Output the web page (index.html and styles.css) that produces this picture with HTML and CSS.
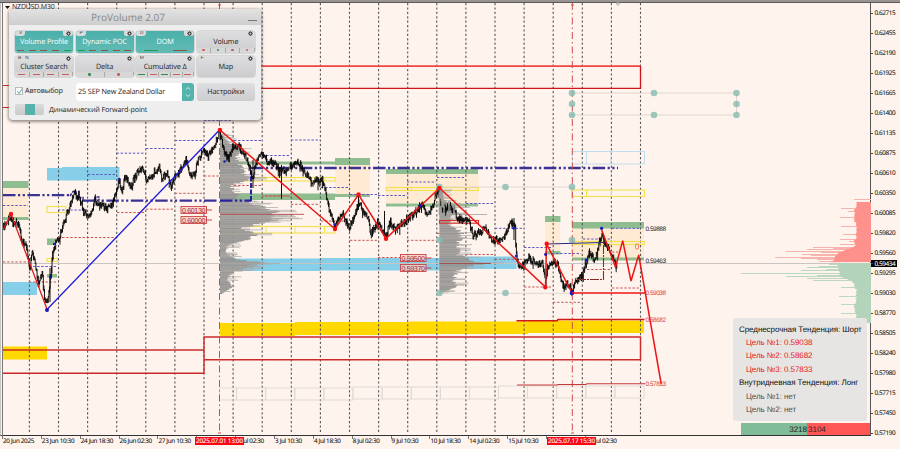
FILE: index.html
```html
<!DOCTYPE html>
<html lang="ru">
<head>
<meta charset="utf-8">
<title>NZDUSD,M30</title>
<link rel="stylesheet" href="styles.css">
</head>
<body>
<div class="terminal">
  <div class="topbar"></div>
  <div class="workspace">
    <main class="plot">
      <svg class="chart" id="chart" viewBox="0 0 872 436" width="872" height="436"></svg>

      <span class="symbol">NZDUSD,M30</span>

      <section class="panel">
        <header class="panel-title"><span>ProVolume 2.07</span><i class="minimize"></i></header>
        <div class="panel-body">
          <div class="buttons" id="buttons"></div>
          <div class="row">
            <label class="auto"><span class="check"><svg viewBox="0 0 8 8"><path d="M1.5 3.5 L3.5 6.5 L7 0.5"/></svg></span>Автовыбор</label>
            <div class="select"><span>25 SEP New Zealand Dollar</span><b><svg viewBox="0 0 12 18"><path d="M4 6.5 L6 4.5 L8 6.5 M4 11.5 L6 13.5 L8 11.5"/></svg></b></div>
            <button class="settings">Настройки</button>
          </div>
          <div class="row toggle-row"><span class="toggle"><i></i></span><span class="toggle-label">Динамический Forward-point</span></div>
        </div>
      </section>

      <section class="trend">
        <p class="head">Среднесрочная Тенденция: Шорт</p>
        <p class="target short">Цель №1: 0.59038</p>
        <p class="target short">Цель №2: 0.58682</p>
        <p class="target short">Цель №3: 0.57833</p>
        <p class="head">Внутридневная Тенденция: Лонг</p>
        <p class="target">Цель №1: нет</p>
        <p class="target">Цель №2: нет</p>
      </section>

      <div class="balance"><span class="buy">3218</span><span class="sell">3104</span></div>
    </main>
    <aside class="prices" id="prices"><span class="current">0.59434</span></aside>
  </div>
  <footer class="times" id="times"><span class="flag first">2025.07.01 13:00</span><span class="flag second">2025.07.17 15:30</span></footer>
</div>
<script src="chart.js"></script>
</body>
</html>
```
FILE: styles.css
```css
* { box-sizing: border-box; }
body { margin: 0; background: #fff4ed; font-family: "Open Sans", "Noto Sans", sans-serif; color: #222; text-rendering: geometricPrecision; }
.terminal { width: 900px; height: 449px; overflow: hidden; display: flex; flex-direction: column; background: #fff4ed; }
.topbar { height: 3px; background: #989494; border-bottom: 1px solid #5d5959; flex: none; }
.workspace { display: flex; height: 433px; flex: none; }
.plot { position: relative; width: 871px; border-left: 1px solid #c9c4c2; border-right: 1px solid #555; border-bottom: 1px solid #333; flex: none; }
.chart { position: absolute; left: -1px; top: -3px; overflow: visible; }
.symbol { position: absolute; left: 11px; top: 1px; font: 7px/8px "Open Sans", sans-serif; color: #222; letter-spacing: -0.2px; }

.panel { position: absolute; left: 8px; top: 6px; width: 252px; height: 111px; border-radius: 4px; background: #eeeeee; box-shadow: 0 1px 3px 1px rgba(90, 80, 75, .6); }
.panel-title { height: 16px; display: flex; align-items: center; justify-content: center; position: relative; padding-right: 14px; border-radius: 4px 4px 0 0; background: linear-gradient(#e2e2e2, #cecece); color: #888; font-size: 10px; line-height: 16px; }
.minimize { position: absolute; right: 4px; bottom: 4px; width: 9px; height: 1px; background: #777; }
.panel-body { padding: 6px 6px 0; }
.buttons { display: grid; grid-template-columns: repeat(4, 58px); column-gap: 2.6px; row-gap: 3px; }
.btn { height: 21.5px; border-radius: 3px; overflow: hidden; background: linear-gradient(#dedddf, #cccbcd); box-shadow: 0 0 0 .5px #bdbdbd; display: grid; grid-template-rows: 5px 11.5px 5px; text-align: center; }
.btn.on { background: linear-gradient(#4ab0aa, #63bbb4); color: #fff; }
.btn .tabs { display: flex; justify-content: space-between; }
.tab { height: 5px; padding: 0 2px 0 3px; background: #dcdcdc; border-radius: 0 0 3px 2px; font: 4.8px/5px "Liberation Sans", sans-serif; color: #444; min-width: 10px; white-space: pre; }
.tab svg { display: block; width: 5px; height: 5px; overflow: visible; }
.tab.gear { padding-left: 3px; }
.tab.none { background: none; }
.btn .name { font-size: 7.3px; line-height: 12px; letter-spacing: -.12px; white-space: nowrap; }
.marks { display: flex; }
.marks i { flex: 1; display: flex; align-items: center; justify-content: center; border-right: .5px solid #aaa; background: #d8d7d8; }
.on .marks i { background: none; border: 0; }
.marks i::after { content: ""; width: 7px; height: 1px; background: currentColor; }
.marks.two i::after { width: 14px; }
.marks.dots i::after { width: 2.4px; height: 2.4px; border-radius: 50%; }
.marks .r { color: #ce5b5b; }
.marks .g { color: #368b50; }
.on .marks .r { color: #8f5444; }
.on .marks .g { color: #1f9a55; }
.row { display: flex; margin-top: 6px; height: 18px; }
.auto { width: 60.6px; display: flex; align-items: center; gap: 2px; font-size: 7.2px; letter-spacing: -.15px; height: 15px; }
.check { width: 8px; height: 8px; background: #fff; border: .5px solid #bbb; }
.check svg { display: block; width: 7px; height: 7px; fill: none; stroke: #35a39d; overflow: visible; }
.select { width: 118.5px; background: #fff; border-radius: 3px; display: flex; justify-content: space-between; overflow: hidden; font-size: 7.3px; letter-spacing: -.17px; line-height: 18px; padding-left: 2.5px; margin-right: 2.6px; }
.select b { width: 12px; background: #55b3ad; }
.select svg { display: block; width: 12px; height: 18px; fill: none; stroke: #fff; stroke-width: .8; }
.settings { width: 58px; border: 0; padding: 0; border-radius: 3px; font: 7.3px/17px "Open Sans", sans-serif; letter-spacing: -.15px; color: #222; background: linear-gradient(#dfdee0, #cdccce); text-rendering: inherit; }
.toggle-row { margin-top: 2.5px; height: 12px; align-items: center; gap: 5px; font-size: 7.2px; letter-spacing: -.15px; }
.toggle { width: 29px; height: 11px; border-radius: 2px; background: linear-gradient(#dcdcdc, #cacaca); display: flex; justify-content: center; }
.toggle i { width: 10px; background: #55b3ad; }

.trend { position: absolute; left: 732px; top: 315px; width: 134px; height: 103px; padding: 4.5px 0 0 6px; border-radius: 3px; background: #e7e5e3; font: 8px/13.4px "Liberation Sans", Arial, sans-serif; letter-spacing: -.07px; white-space: nowrap; }
.trend p { margin: 0; color: #505050; }
.trend .head { color: #111; }
.trend .target { padding-left: 7px; }
.trend .short { color: #e8201e; }

.balance { position: absolute; right: 0; bottom: 0; width: 129px; height: 12px; display: flex; font: 8px/13px "Liberation Sans", Arial, sans-serif; color: #222; }
.buy { width: 66px; background: #7fbc97; text-align: right; padding-right: 0; }
.sell { flex: 1; background: #ff5656; padding-left: 1px; }

.prices { position: relative; width: 29px; display: grid; grid-auto-rows: 20px; font-size: 6.4px; line-height: 20px; letter-spacing: -0.4px; color: #111; -webkit-text-stroke: .1px; }
.prices span { display: flex; align-items: center; gap: 1.5px; height: 20px; }
.prices span::before { content: ""; width: 2px; height: 1px; background: #444; }
.prices .current { position: absolute; top: 257px; left: 0; width: 26px; height: 7px; background: #000; color: #fff; line-height: 7px; }

.times { position: relative; height: 13px; display: grid; grid-auto-flow: column; grid-auto-columns: 38.86px; justify-content: start; padding-left: 2px; font-size: 6.3px; line-height: 10px; letter-spacing: -0.3px; color: #111; white-space: nowrap; -webkit-text-stroke: .1px; }
.times .tick { border-left: .6px solid #777; height: 3px; line-height: 10px; }
.times .tick.after-first { padding-left: 7px; }
.times .tick.after-second { padding-left: 10px; }
.times .flag { position: absolute; top: 1px; height: 7.5px; line-height: 7.5px; width: 49px; background: #fa0512; color: #fff; text-align: center; letter-spacing: -.18px; }
.times .first { left: 195px; }
.times .second { left: 547px; }
```
FILE: chart.js
```javascript
const NS = 'http://www.w3.org/2000/svg';
const chart = document.getElementById('chart');

// Seeded generator keeps the series the same on every load.
let seed = 7;
function rnd() { seed = (seed * 16807) % 2147483647; return seed / 2147483647; }

function add(tag, attrs, text) {
  const node = document.createElementNS(NS, tag);
  for (const key in attrs) node.setAttribute(key, attrs[key]);
  if (text) node.textContent = text;
  chart.appendChild(node);
  return node;
}
function box(x1, y1, x2, y2, fill, opacity) {
  add('rect', { x: x1, y: y1, width: x2 - x1, height: y2 - y1, fill, opacity: opacity || 1 });
}
function frame(x1, y1, x2, y2, stroke, width) {
  add('rect', { x: x1, y: y1, width: x2 - x1, height: y2 - y1, fill: 'none', stroke, 'stroke-width': width || 1 });
}
function line(d, stroke, width, dash) {
  add('path', { d, fill: 'none', stroke, 'stroke-width': width || 1, 'stroke-dasharray': dash || 'none' });
}
function at(points, t, key, value) {
  for (let i = 1; i < points.length; i++) {
    if (t <= points[i][key]) {
      const a = points[i - 1], b = points[i];
      return a[value] + (b[value] - a[value]) * (t - a[key]) / (b[key] - a[key]);
    }
  }
  return points[points.length - 1][value];
}

const GREEN = '#8fbd90', SKY = '#87cee9', GOLD = '#ffd800', CREAM = '#ffebd3', PALE = '#f2e14c';

// Value zones
[[3,188,28,217],[335,165,370,194],[386,174,478.5,203],[545,222,560,251],[572,228,644,258]].forEach(r => box(...r, CREAM));
[[3,282,37,295],[47,168,91,180.5],[62,167,119.5,180],[220,258.5,320,271],[320,258,440,270.5],[440,256.5,516.5,269]].forEach(r => box(...r, SKY));
[[3,346.5,47,359.5],[220,323,295,336],[295,322,410,335],[410,321.5,528,334],[528,320.5,644,333]].forEach(r => box(...r, GOLD));
[[3,181,28.5,188],[3,217,28.5,220],[47,238.5,56,245],[47,274,57,277.5],[220,161.5,335,164.5],[335,158,370,165],
 [220,193.5,335,200],[335,194,370,197],[386,169,478,174],[386,203.5,478,206.5],[545,216,560.5,222],[545,251,560.5,254.5],
 [572,222,644,228.5],[572,257.5,644,260.5]].forEach(r => box(...r, GREEN));

// Period separators
for (let i = 0; i < 22; i++) line(`M${29.4 + 29.1 * i} 3 V433`, '#555', 1.1, '2.2 2.2');
line('M3 263.5 H871', '#c9c4c1', 1);

// Forward levels
for (let i = 0; i < 15; i++) {
  const x1 = i ? 207.5 + 29.1 * i : 219.5, x2 = Math.min(236.6 + 29.1 * i, 644.5);
  const y = i < 5 ? 388 : i < 10 ? 387 : 386;
  frame(x1, y, x2, y + 12, '#ddd8d6', .9);
}
frame(572.5, 151.5, 644.5, 164, '#b9dbea', .9);
line('M586.5 151.5 V164 M611 151.5 V164', '#b9dbea', .9);
[[47,206.5,66,212.5],[47,258.5,57.5,261.5],[220,177.5,335,181],[220,226.5,335,233],[386,187.5,478.5,190.5],[572,190,644.5,196.5],[572,241.5,644.5,244.5]]
  .forEach(r => frame(...r, PALE, 1.1));
line('M236.5 226.5 V233 M266 226.5 V233 M295 226.5 V233 M324.5 226.5 V233 M266 177.5 V181 M295 177.5 V181 M325 177.5 V181 M586.5 190 V197 M611.5 190 V197 M586.5 242 V244.5 M611.5 242 V244.5 M411.5 187 V190 M469.5 187 V190', PALE, 1);

// Resistance and support boxes
line('M3 85.5 H12 M3 107.5 H12', '#dd1a1a', 1.2);
line('M200 66.2 H640.5', '#f04440', 1.8);
line('M640.5 66 V88.3 H200', '#cf1518', 1.3);
line('M3 350 H204 M3 373.2 H204 V337 H640.5 V359.7 H204', '#cc2a2a', 1.4);

// Day highs and lows
line(`M3 205.5 H28 M29 266.5 H57 M58 210 H87 M88 174.5 H116 M116.5 153.2 H145 M146 148.5 H174 M175 140.5 H203 M204 120.5 H233
 M234 140.5 H262 M262 155.5 H290 M291 140 H320 M321 187.5 H349 M350 194.5 H378 M378 195.5 H407 M407 182 H436 M437 177.5 H465 M466 203.5 H494
 M495 228.3 H523 M524 247.5 H552 M552 253.5 H581 M583 239 H611 M612 228.3 H640`, '#5a56c4', 1, '2.4 1.7');
line(`M3 262 H29 M29 282 H57 M58 237.5 H116 M117 212.5 H145 M146 209.2 H174 M175 193.3 H203 M204 176 H219 M234 185.5 H262 M262 196 H290 M291 204.3 H320
 M321 221 H349 M350 240.3 H378 M378 257.5 H400 M407 240.3 H436 M437 233.5 H465 M466 254.5 H494 M495 259.3 H523 M524 287 H552
 M553 302.3 H581 M583 269.5 H611 M612 252 H618 M612 288 H640`, '#c75452', 1, '2.4 1.7');

// Volume profiles: a solid body with one bar per price step
function profile(x, y1, y2, shape) {
  let body = '', tails = '';
  for (let y = y1; y < y2; y += .7) {
    const w = at(shape, y, 0, 1);
    body += `M${x} ${y.toFixed(1)}h${(w * (.72 + rnd() * .3)).toFixed(1)}`;
    if (rnd() > .7) tails += `M${x} ${y.toFixed(1)}h${(w * 1.1 + rnd() * 12).toFixed(1)}`;
  }
  line(body, '#959493', 1);
  line(tails, '#aaa6a4', .7);
}
profile(220, 134, 294, [[134,2],[143,10],[150,26],[157,16],[163,24],[170,24],[175,28],[180,34],[184,12],[190,14],[200,24],[205,44],[210,60],[213,62],[216,56],[219,68],
  [222,50],[227,27],[232,34],[236,42],[240,28],[244,10],[250,7],[255,8],[260,24],[263,48],[267,34],[272,14],[280,8],[287,15],[294,2]]);
profile(439.5, 190, 293, [[190,3],[200,5],[206,18],[213,20],[218,12],[225,10],[232,24],[240,24],[247,20],[255,22],[260,34],[263.5,54],[267,32],[272,19],[280,16],[287,19],[293,2]]);
line('M220 214.3 H304', '#b04a4a', .9);
line('M439.5 263.5 H491', '#a05050', 1);
line('M439.5 214.5 H487', '#a5a09e', .8);
line('M265 196 H290', '#c75452', 1, '2 2');
frame(439.5, 220.5, 478.5, 223.2, '#d8302c', 1.1);

// Dynamic point of control
const NAVY = '#3a3197', DASH = '12.5 2.5 2.2 2.5 2.2 2.5';
line('M3 195.2 H70 M82 200.6 H219', NAVY, 2.3, DASH);
line('M70 196 L73 191.5 H76 L77 197.5 H83 V200.5 M94 200 L96 197 H99 V200.5', NAVY, 1.5, '3 1');
line('M220 200.6 H251', '#2722a0', 2.3, DASH);
line('M251 201 V167.5', '#2722a0', 2, '5 1.5');
line('M251 168 H618', NAVY, 2.5, DASH);

// Price bars
const price = [[3,228],[7,222],[11,216],[14,224],[17,221],[20,230],[22,242],[26,245],[28,257],[30,270],[32,250],[35,262],[38,283],[42,272],[45,304],[48,300],[49,290],[51,272],[52,260],
[54,247],[58,240],[60,237],[62,227],[67,215],[71,202],[74,192],[77,200],[79,195],[83,210],[88,218],[92,213],[95,198],[98,205],[103,206],[107,210],[112,203],[117,189],[119,180],
[122,194],[125,174],[131,187],[137,173],[143,168],[147,182],[153,174],[159,167],[162,179],[167,173],[171,186],[175,177],[180,170],[186,160],[190,174],[194,176],[198,161],[203,150],
[208,157],[215,145],[219,133],[221,137],[224,150],[228,159],[232,149],[238,144],[243,152],[248,163],[252.7,180],[255,167],[258,159],[263,154],[268,162],[275,163],[281,172],[287,168],
[295,163],[300,164],[305,174],[313,182],[322,180],[325,190],[330,212],[335,226],[342,213],[349,227],[355,216],[358.5,203],[363,212],[368,218],[371,235],[374,228],[378,223],[386,236],
[390,222],[395,229],[403,223],[413,215],[422,204],[428,217],[433,203],[438,192],[441,207],[443,211],[450,205],[458,218],[468,221],[471,228],[473,236],[485,229],[493,241],[503,240],[510,224],
[515,223],[516,255],[519,266],[525,264],[529,256],[535,264],[542,262],[545.5,284],[547,268],[553,262],[558,265],[562,282],[565,289],[568,283],[572,291],[575,282],[582,276],[589,253],
[595,260],[602,233],[605,245],[610,251],[615,264],[618,264]];
let bars = '', last = 228;
for (let x = 3; x <= 617; x += .62) {
  const y = at(price, x, 0, 1) + (rnd() - .5) * 6;
  const top = Math.min(y, last) - rnd() * 2.8, low = Math.max(y, last) + rnd() * 2.8 + (rnd() > .95 ? 4 : 0);
  bars += `M${x.toFixed(1)} ${top.toFixed(1)}V${low.toFixed(1)}`;
  last = y;
}
line(bars, '#000', .92);
line('M281.5 165 V199 M253 160 V188 M358.5 195 V210 M384.5 211 V236 M514 218 V240 M50 268 V302', '#111', 1);
line('M439.5 192 V215 M441 206 V212 M444 207 V216 M449 201 V212 M454 206 V214', '#999', 1.5);

// Vertical markers
line('M219.5 3 V433 M572.3 3 V433', '#cf4a4a', 1, '7 3 1.5 3');
line('M218 5 H221 M218 433 H221 M571 5 H574 M571 433 H574', '#cf4a4a', 1);

// Selection handles
line('M572 93 H736.5 V115 H572 M439.5 187 H572 M439.5 293.3 H572', '#ddd3ce', .9);
[[572,93],[654,93],[736.5,93],[572,104],[736.5,104],[572,115],[654,115],[736.5,115],[439.5,187],[505.5,187],[572,187],[439.5,240],[572,240],[439.5,293],[505.5,293]]
  .forEach(([cx, cy]) => add('circle', { cx, cy, r: 3.3, fill: '#86bab0', opacity: .8 }));

// Zigzag
line('M47 309.5 L219.5 130', '#1a1ae0', 1.3);
line('M3 230 L11 214 L47 309', '#dc1f1f', 1.3);
line('M220 130 L335 229 L358.5 194.5 L386 238.5 L439.5 188 L545.5 287 L546.5 244 L572 293', '#ec1515', 1.5);
line('M601.7 230 L615.5 267 L622.7 240.7 L631 281 L638.7 255 L661.2 384', '#ec1515', 1.5);
line('M546.5 244 L603 242.5', '#2b2a85', 1.2);
line('M577 279.5 H603.5 V240', '#8b2a2a', 1.1, '9 1 2 1');
[[11,214],[220,130],[335,229],[358.5,194.5],[386,238.7],[439.3,188],[545.3,287.3],[546.7,243.7]].forEach(([cx, cy]) => add('circle', { cx, cy, r: 2.2, fill: '#fa1010' }));
[[47,310,2],[572,293,2.3],[54,244,1.2],[50,277,1.2],[119.3,179,1.2],[224.5,161.5,1.2],[335,224.5,1.2],[513.7,228.3,1.4],[516.3,256,1.4],[545.5,254.5,1.4],[601.6,228.3,1.6],[586,260,1.4],[420,206,1.4]]
  .forEach(([cx, cy, r]) => add('circle', { cx, cy, r, fill: '#1515c0' }));

// Targets
line('M572 293 H645', '#ee1414', 1.4);
line('M516.5 320.7 H557 L558 319.5 H644.5', '#cf1818', 1.6);
line('M517 385 H557 L558 384.5 H586 L587 383.7 H645', '#c43838', 1.1);
[['0.59888',228.3,'#222'],['0.59463',260.3,'#222'],['0.59038',292.8,'#e0403c'],['0.58682',319.7,'#e0403c'],['0.57833',384,'#e0403c']]
  .forEach(([t, y, fill]) => add('text', { x: 645.5, y: y + 2.3, fill, 'font-size': 6.4, textLength: 20.5, 'font-family': 'Liberation Sans, sans-serif' }, t));
[['0.60130',181,210],['0.60000',181,220],['0.59500',400.5,258],['0.59370',400.5,268]].forEach(([t, x, y]) => {
  box(x, y - 3.5, x + 25.5, y + 3.5, '#f5cfc9', .75);
  frame(x, y - 3.5, x + 25.5, y + 3.5, '#c84444', .9);
  add('text', { x: x + 1, y: y + 2.6, fill: '#b02a2e', 'font-size': 7.2, textLength: 23.5, 'font-family': 'Liberation Sans, sans-serif' }, t);
  line(`M${x + 25} ${y} h6`, '#c84444', 1);
});
add('rect', { x: 635.5, y: 244, width: 3, height: 5, rx: 1.3, fill: 'none', stroke: '#ef6b52', 'stroke-width': .9 });

// Depth of market
const bids = [[202,14],[208,14],[209,16],[221,16],[222,14],[238,14],[240,16],[245,15],[248,20],[252,31],[256,35],[259,36],[262,40]];
const asks = [[263,33],[270,31],[276,30],[280,20],[283,16],[290,14],[300,14],[306,16],[315,14],[322,13]];
function depth(y1, y2, shape, fill, light, spikes) {
  spikes.forEach(([y, w]) => box(871 - w, y, 871, y + 1, light));
  for (let y = y1; y < y2; y += 1) box(871 - at(shape, y, 0, 1) - rnd() * 1.5, y, 871, y + 1.1, fill);
}
depth(202, 262, bids, '#ff918d', '#f7b3ac', [[199,17],[208,30],[211,23],[217,31],[226,30],[234,28],[239,31],[241,22],[244,31],[247,58],[248,38],[249,64],[251,85],[252,50],[254,69],[255,60],[257,96],[258,70],[259,54],[261,52]]);
depth(263, 322.5, asks, '#b3d3ba', '#bcd8c1', [[264,42],[266,52],[267,64],[269,45],[270,70],[273,130],[275,54],[276,85],[278,64],[280,58],[287,30],[296,32],[304,30],[313,30]]);

line('M616 3 L620 3 L618 5.5 Z', '#aaa', 1);
add('path', { d: 'M5 6 H10 L7.5 9 Z', fill: '#111' });
line('M2.5 3 V436', '#777', 1);

// Control buttons
const gear = '<svg viewBox="0 0 6 6"><circle cx="3" cy="3" r="1.7" fill="none" stroke="#444" stroke-width="1.3"/><path d="M3 .2V1.2M3 4.8V5.8M.2 3H1.2M4.8 3H5.8M1 1L1.7 1.7M4.3 4.3L5 5M5 1L4.3 1.7M1.7 4.3L1 5" stroke="#444" stroke-width=".8"/></svg>';
document.getElementById('buttons').innerHTML = [
  ['Volume Profile', 'V', 'on', 'rrrrg', ''], ['Dynamic POC', 'P', 'on', 'grrrr', ''], ['DOM', 'D', 'on', 'gr', 'two'], ['Volume', '', '', 'rgrr', 'dots'],
  ['Cluster Search', 'B   N', '', 'rrrr', ''], ['Delta', '', '', 'gr', 'dots'], ['Cumulative Δ', 'M', '', 'grgrr', ''], ['Map', 'F', '', '', '']
].map(([name, tab, on, marks, kind]) => `<div class="btn ${on}"><div class="tabs"><span class="tab ${tab ? '' : 'none'}">${tab}</span><span class="tab gear">${gear}</span></div>
<span class="name">${name}</span><div class="marks ${kind}">${[...marks].map(m => `<i class="${m}"></i>`).join('')}</div></div>`).join('');

// Axes
const prices = ['62715','62455','62190','61925','61665','61400','61135','60875','60610','60350','60085','59820','59560','59295','59030','58770','58505','58240','57980','57715','57450','57190'];
document.getElementById('prices').insertAdjacentHTML('afterbegin', prices.map(p => `<span>0.${p}</span>`).join(''));
const times = [['20 Jun 2025'],['23 Jun 10:30'],['24 Jun 18:30'],['26 Jun 02:30'],['27 Jun 10:30'],[''],['ul 02:30','after-first'],['3 Jul 10:30'],['4 Jul 18:30'],['8 Jul 02:30'],['9 Jul 10:30'],['10 Jul 18:30'],['14 Jul 02:30'],['15 Jul 10:30'],[''],['ul 02:30','after-second']];
document.getElementById('times').insertAdjacentHTML('afterbegin', times.map(([t, c]) => `<span class="tick ${c || ''}">${t}</span>`).join(''));
```
